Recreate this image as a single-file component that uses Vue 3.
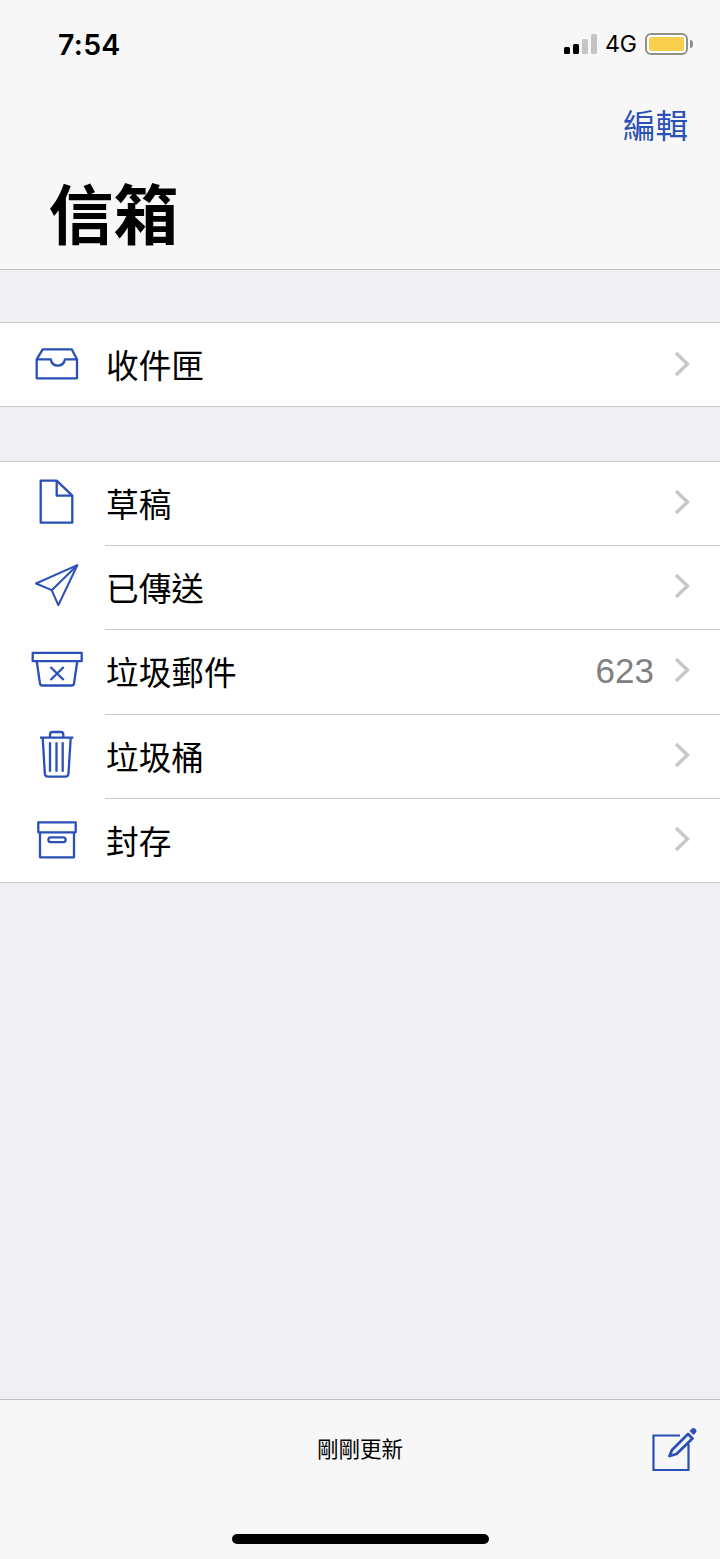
<script setup>
const inbox = { label: '收件匣', paths: ['M17.7 16.3H46.7L52 26.3V45.3H11.7V26.3Z', 'M11.7 26.3H25.7C26.5 30.5 29 32.7 32.8 32.7C36.6 32.7 39.2 30.5 40 26.3H52'] }
const rows = [
  { label: '草稿', paths: ['M15.7 9.7H31.7L47.3 24.7V51.7H15.7Z', 'M31.7 9.7V24.7H47.3'] },
  { label: '已傳送', paths: ['M52.3 10.2L11 28.5L26.7 35.2L33.3 50.2Z', 'M52.3 10.2L26.7 35.2'], thin: true },
  { label: '垃圾郵件', count: '623', paths: ['M7.7 13.8H56.7V22.2H7.7Z', 'M11.7 22.2L15 44.5Q15.3 46.5 17.3 46.5H46.7Q48.7 46.5 49 44.5L52.3 22.2', 'M25.5 28L38.7 41M38.7 28L25.5 41'] },
  { label: '垃圾桶', paths: ['M15 13.7H48.3', 'M25 13.7V10.5Q25 8 27.5 8H35.8Q38.3 8 38.3 10.5V13.7', 'M17.7 13.7L19.8 49.5Q20 52.7 23 52.7H40.3Q43.3 52.7 43.5 49.5L45.7 13.7', 'M25 18.3V47.7M31.5 18.3V47.7M37.7 18.3V47.7'] },
  { label: '封存', paths: ['M13.3 14.3H50.7V24.3H13.3Z', 'M15 24.3V49.3H49V24.3', 'M25.8 29.4H38.2A2.4 2.4 0 0 1 38.2 34.2H25.8A2.4 2.4 0 0 1 25.8 29.4Z'] },
]
</script>

<template>
  <div class="page">
    <header class="top">
      <div class="status">
        <span class="time">7:54</span>
        <div class="status-right">
          <div class="bars">
            <i class="bar b1"></i><i class="bar b2"></i><i class="bar b3"></i><i class="bar b4"></i>
          </div>
          <span class="net">4G</span>
          <div class="battery"><div class="battery-fill"></div></div>
          <i class="nub"></i>
        </div>
      </div>
      <div class="edit-line"><span class="edit">編輯</span></div>
      <h1 class="title">信箱</h1>
    </header>

    <section class="group first">
      <div class="row">
        <svg class="icon" viewBox="0 0 64 64" fill="none">
          <path v-for="d in inbox.paths" :key="d" :d="d" />
        </svg>
        <div class="row-body last">
          <span class="label">{{ inbox.label }}</span>
          <svg class="chev" viewBox="0 0 16 26" fill="none"><path d="M2 2L13.5 13L2 24" /></svg>
        </div>
      </div>
    </section>

    <section class="group second">
      <div v-for="(r, i) in rows" :key="r.label" class="row">
        <svg class="icon" :class="{ thin: r.thin }" viewBox="0 0 64 64" fill="none">
          <path v-for="d in r.paths" :key="d" :d="d" />
        </svg>
        <div class="row-body" :class="{ last: i === rows.length - 1 }">
          <span class="label">{{ r.label }}</span>
          <span v-if="r.count" class="count">{{ r.count }}</span>
          <svg class="chev" viewBox="0 0 16 26" fill="none"><path d="M2 2L13.5 13L2 24" /></svg>
        </div>
      </div>
    </section>

    <div class="spacer"></div>

    <footer class="bottom">
      <div class="tools">
        <span class="updated">剛剛更新</span>
        <svg class="compose" viewBox="0 0 48 48" fill="none">
          <path class="box" d="M31 11.5H4.5V46H39.500V20" />
          <path class="pen" d="M20.500 32L23 26L39 10L43.500 14.500L27.500 30Z" />
          <path class="tip" d="M40.500 7L42.500 5A2.600 2.600 0 0 1 46.500 9L44.500 11Z" />
        </svg>
      </div>
      <div class="home"></div>
    </footer>
  </div>
</template>

<style scoped>
.page {
  width: 720px;
  height: 1559px;
  display: flex;
  flex-direction: column;
  background: #efeff4;
  overflow: hidden;
  font-family: "Noto Sans CJK TC", "Noto Sans", sans-serif;
  color: #000;
}
.top {
  height: 270px;
  box-sizing: border-box;
  background: #f7f7f7;
  border-bottom: 1px solid #bfbfc3;
  flex: none;
}
.status {
  height: 88px;
  display: flex;
  align-items: center;
  justify-content: space-between;
  padding: 0 27px 0 58px;
}
.time {
  font-family: Inter, sans-serif;
  font-weight: 600;
  font-size: 28.500px;
  letter-spacing: 0.3px;
}
.status-right {
  display: flex;
  align-items: center;
}
.bars {
  display: flex;
  align-items: flex-end;
  gap: 3.500px;
  height: 20px;
}
.bar {
  display: block;
  width: 5.500px;
  border-radius: 1.500px;
}
.b1 { height: 7px; background: #000; }
.b2 { height: 10px; background: #000; }
.b3 { height: 15px; background: #c4c4c6; }
.b4 { height: 20px; background: #c4c4c6; }
.net {
  font-family: Inter, sans-serif;
  font-size: 23px;
  margin: 0 8px 0 8px;
}
.battery {
  width: 43px;
  height: 22px;
  box-sizing: border-box;
  border: 2px solid #8f8f8f;
  border-radius: 6px;
  padding: 2px;
  background: #fff;
}
.battery-fill {
  height: 100%;
  background: #f8cf4c;
  border-radius: 2px;
}
.nub {
  display: block;
  width: 3px;
  height: 8px;
  margin-left: 2px;
  background: #8f8f8f;
  border-radius: 0 3px 3px 0;
}
.edit-line {
  display: flex;
  justify-content: flex-end;
  padding-right: 32px;
}
.edit {
  font-size: 32.500px;
  line-height: 72px;
  color: #2a50b8;
}
.title {
  margin: 0;
  padding-left: 48.500px;
  font-size: 65px;
  font-weight: 700;
  line-height: 96px;
  margin-top: 3px;
}
.group {
  background: #fff;
  flex: none;
  border-top: 1px solid #c8c8cc;
}
.first { margin-top: 52px; }
.second { margin-top: 54px; }
.row {
  display: flex;
  height: 84.200px;
}
.first .row { height: 84px; }
.icon {
  width: 64px;
  height: 64px;
  flex: none;
  margin: 9px 16px 0 25px;
}
.first .icon { margin-top: 10px; }
.icon path {
  stroke: #2a50b8;
  stroke-width: 2.300;
  stroke-linejoin: round;
}
.icon.thin path { stroke-width: 2; }
.row-body {
  flex: 1;
  display: flex;
  align-items: center;
  box-sizing: border-box;
  border-bottom: 1px solid #c8c8cc;
  padding: 0 30px 3px 1px;
}
.label {
  font-size: 32.700px;
  line-height: 48px;
  margin-top: 2px;
  flex: 1;
}
.count {
  font-family: "Liberation Sans", Inter, sans-serif;
  font-size: 35px;
  color: #808084;
  margin-top: 2px;
  margin-right: 20px;
}
.chev {
  width: 16px;
  height: 26px;
  flex: none;
}
.first .chev { margin-top: 2px; }
.chev path {
  stroke: #c7c7cc;
  stroke-width: 3.500;
}
.last { margin-left: -105px; padding-left: 106px; }
.spacer { flex: 1; }
.bottom {
  height: 160px;
  box-sizing: border-box;
  flex: none;
  background: #f7f7f7;
  border-top: 1px solid #bfbfc3;
  display: flex;
  flex-direction: column;
  align-items: center;
}
.tools {
  position: relative;
  width: 100%;
  display: flex;
  justify-content: center;
  padding-top: 31px;
}
.updated {
  font-size: 21.500px;
  line-height: 34px;
}
.compose {
  position: absolute;
  left: 649px;
  top: 24px;
  width: 48px;
  height: 48px;
}
.box { stroke: #2a50b8; stroke-width: 2.200; }
.pen { stroke: #2a50b8; stroke-width: 2.800; stroke-linejoin: round; }
.tip { fill: #2a50b8; }
.home {
  width: 257px;
  height: 10px;
  border-radius: 5px;
  background: #000;
  margin-top: 69px;
}
</style>
